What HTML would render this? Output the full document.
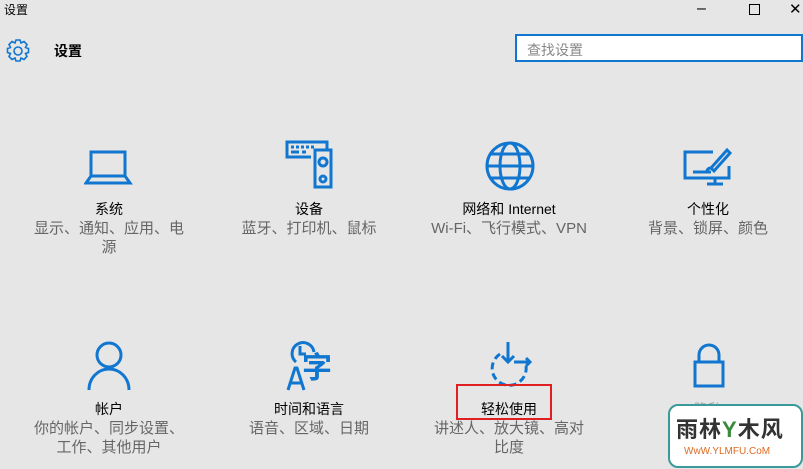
<!DOCTYPE html>
<html><head><meta charset="utf-8"><style>
body{margin:0;width:803px;height:469px;background:#e6e6e6;font-family:"Liberation Sans","Noto Sans CJK SC",sans-serif;position:relative;overflow:hidden}
.a{position:absolute}
.t{position:absolute;text-align:center;font-size:14px;color:#000;width:180px}
.s{position:absolute;text-align:center;font-size:15px;color:#666;width:180px;line-height:19px}
svg{position:absolute;fill:none;stroke:#1076d0;stroke-width:3}
</style></head><body>
<div class="a" style="left:4px;top:1px;font-size:12px">设置</div>
<div class="a" style="left:697px;top:0px;font-size:16px">–</div>
<div class="a" style="left:749px;top:4px;width:9px;height:9px;border:1px solid #000"></div>
<div class="a" style="left:789px;top:0px;font-size:15px">✕</div>
<svg style="left:5px;top:38px;stroke-width:1.6" width="26" height="26" viewBox="0 0 26 26"><circle cx="13" cy="13" r="4"/><path d="M11 2h4l1 3 3-1.5 3 3-1.5 3 3 1v4l-3 1 1.5 3-3 3-3-1.5-1 3h-4l-1-3-3 1.5-3-3 1.5-3-3-1v-4l3-1-1.5-3 3-3 3 1.5z"/></svg>
<div class="a" style="left:54px;top:41px;font-size:14px;font-weight:bold">设置</div>
<div class="a" style="left:515px;top:34px;width:288px;height:28px;background:#fff;border:2px solid #1076d0;box-sizing:border-box"></div>
<div class="a" style="left:527px;top:40px;font-size:14px;color:#888">查找设置</div>
<svg style="left:84px;top:150px" width="50" height="36" viewBox="0 0 50 36"><rect x="7" y="2" width="34" height="24"/><path d="M7 26l-5 7h44l-5-7"/></svg>
<svg style="left:285px;top:140px" width="50" height="52" viewBox="0 0 50 52"><path d="M26 17H2V2h40v7"/><path d="M6 7h3m2 0h3m2 0h3m2 0h3m2 0h3M6 12h8m3 0h4"/><rect x="30" y="10" width="16" height="37"/><circle cx="38" cy="22" r="4"/><circle cx="38" cy="39" r="3"/></svg>
<svg style="left:484px;top:140px" width="52" height="52" viewBox="0 0 52 52"><circle cx="26" cy="26" r="23"/><ellipse cx="26" cy="26" rx="10" ry="23"/><path d="M3 26h46M7 14h38M7 38h38"/></svg>
<svg style="left:683px;top:146px" width="50" height="40" viewBox="0 0 50 40"><path d="M30 6H2v26h44V20M24 38h16M32 32v6M10 26h16"/><path d="M28 22l16-18 3 3-16 18z"/><path d="M28 22c-4 0-5 4-3 4h3"/></svg>
<div class="t" style="left:19px;top:199px">系统</div>
<div class="s" style="left:19px;top:219px">显示、通知、应用、电<br>源</div>
<div class="t" style="left:219px;top:199px">设备</div>
<div class="s" style="left:219px;top:219px">蓝牙、打印机、鼠标</div>
<div class="t" style="left:419px;top:199px">网络和 Internet</div>
<div class="s" style="left:419px;top:219px">Wi-Fi、飞行模式、VPN</div>
<div class="t" style="left:618px;top:199px">个性化</div>
<div class="s" style="left:618px;top:219px">背景、锁屏、颜色</div>
<svg style="left:86px;top:340px" width="46" height="50" viewBox="0 0 46 50"><circle cx="23" cy="15" r="12"/><path d="M3 50c0-12 9-21 20-21s20 9 20 21"/></svg>
<svg style="left:284px;top:340px" width="56" height="52" viewBox="0 0 56 52"><path d="M12 22a11 11 0 1 1 18 -10"/><path d="M16 6v8h6"/><path d="M4 50l7-22h2l7 22M7 43h10"/></svg>
<div class="a" style="left:302px;top:352px;font-size:30px;font-weight:bold;color:#1076d0;line-height:34px">字</div>
<svg style="left:480px;top:340px" width="58" height="50" viewBox="0 0 58 50"><path d="M28 2v20M22 16l6 6 6-6M34 22h16M46 18l4 4-4 4"/><path d="M20 14a17 17 0 1 0 26 12" stroke-dasharray="7 4"/></svg>
<svg style="left:693px;top:343px" width="32" height="46" viewBox="0 0 32 46"><path d="M6 18V12a10 10 0 0 1 20 0v6"/><rect x="2" y="19" width="28" height="24"/></svg>
<div class="t" style="left:19px;top:399px">帐户</div>
<div class="s" style="left:19px;top:419px">你的帐户、同步设置、<br>工作、其他用户</div>
<div class="t" style="left:219px;top:399px">时间和语言</div>
<div class="s" style="left:219px;top:419px">语音、区域、日期</div>
<div class="t" style="left:419px;top:399px">轻松使用</div>
<div class="s" style="left:419px;top:419px">讲述人、放大镜、高对<br>比度</div>
<div class="a" style="left:456px;top:384px;width:96px;height:36px;border:2px solid #e02020;box-sizing:border-box"></div>
<div class="t" style="left:618px;top:399px;color:#aaa">隐私</div>
<div class="a" style="left:668px;top:404px;width:131px;height:60px;background:#fff;border:2px solid #3a9a9a;border-radius:10px"></div>
<div class="a" style="left:676px;top:412px;font-size:22px;font-weight:bold;color:#333;letter-spacing:1px">雨林<span style="color:#3a8a3a">Y</span>木风</div>
<div class="a" style="left:684px;top:446px;font-size:10px;color:#e06a20">WwW.YLMFU.CoM</div>
</body></html>
